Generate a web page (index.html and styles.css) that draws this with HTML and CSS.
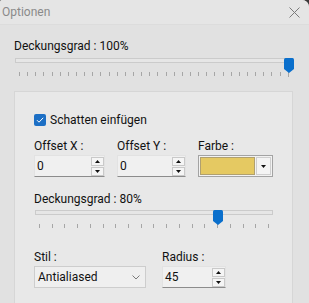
FILE: index.html
```html
<!DOCTYPE html>
<html lang="de">
<head>
<meta charset="utf-8">
<title>Optionen</title>
<link rel="stylesheet" href="styles.css">
</head>
<body>
<div class="window">
  <div class="titlebar">
    <span class="title">Optionen</span>
    <svg class="close" width="11" height="11" viewBox="0 0 11 11"><path d="M0.5 0.5L10.5 10.5M10.5 0.5L0.5 10.5" stroke="#7a7a7a" stroke-width="1" fill="none"/></svg>
  </div>
  <div class="content">
    <div class="label">Deckungsgrad : 100%</div>
    <div class="slider slider-main">
      <div class="track"></div>
      <svg class="thumb" style="left:269px" width="10" height="15" viewBox="0 0 10 15"><path d="M0 1.5Q0 0 1.5 0H8.5Q10 0 10 1.5V11L5 15L0 11Z" fill="#0a6fcc"/></svg>
      <div class="ticks">
        <i></i><i></i><i></i><i></i><i></i><i></i><i></i><i></i><i></i><i></i>
        <i></i><i></i><i></i><i></i><i></i><i></i><i></i><i></i><i></i><i></i>
        <i></i><i></i><i></i><i></i><i></i><i></i><i></i><i></i><i></i><i></i>
        <i></i><i></i><i></i><i class="end"></i>
      </div>
    </div>
    <div class="panel">
      <label class="check-row">
        <span class="checkbox"><svg width="12" height="12" viewBox="0 0 12 12"><path d="M3 6.2L5 8.2L9.2 3.8" stroke="#fff" stroke-width="1" fill="none"/></svg></span>
        <span>Schatten einfügen</span>
      </label>
      <div class="fields">
        <div class="field">
          <div class="label">Offset X :</div>
          <div class="spin">
            <span class="spin-value">0</span>
            <span class="spin-btns">
              <span class="spin-btn"><svg width="5" height="3" viewBox="0 0 5 3"><path d="M2.5 0L5 3H0Z" fill="#111"/></svg></span>
              <span class="spin-btn"><svg width="5" height="3" viewBox="0 0 5 3"><path d="M0 0H5L2.5 3Z" fill="#111"/></svg></span>
            </span>
          </div>
        </div>
        <div class="field">
          <div class="label">Offset Y :</div>
          <div class="spin">
            <span class="spin-value">0</span>
            <span class="spin-btns">
              <span class="spin-btn"><svg width="5" height="3" viewBox="0 0 5 3"><path d="M2.5 0L5 3H0Z" fill="#111"/></svg></span>
              <span class="spin-btn"><svg width="5" height="3" viewBox="0 0 5 3"><path d="M0 0H5L2.5 3Z" fill="#111"/></svg></span>
            </span>
          </div>
        </div>
        <div class="field">
          <div class="label">Farbe :</div>
          <div class="color-pick">
            <span class="swatch" style="background:#e5c962"></span>
            <span class="color-drop"><svg width="5" height="3" viewBox="0 0 5 3"><path d="M0 0H5L2.5 3Z" fill="#111"/></svg></span>
          </div>
        </div>
      </div>
      <div class="label label-clip">Deckungsgrad : 80%</div>
      <div class="slider slider-inner">
        <div class="track"></div>
        <svg class="thumb" style="left:178px" width="10" height="15" viewBox="0 0 10 15"><path d="M0 1.5Q0 0 1.5 0H8.5Q10 0 10 1.5V11L5 15L0 11Z" fill="#0a6fcc"/></svg>
        <div class="ticks">
          <i></i><i></i><i></i><i></i><i></i><i></i><i></i><i></i><i></i><i></i>
          <i></i><i></i><i></i><i></i><i></i><i></i><i></i><i></i><i></i>
        </div>
      </div>
      <div class="fields fields-bottom">
        <div class="field">
          <div class="label">Stil :</div>
          <div class="combo">
            <span>Antialiased</span>
            <svg width="8" height="5" viewBox="0 0 8 5"><path d="M0.5 0.5L4 4L7.5 0.5" stroke="#7a7a7a" stroke-width="1" fill="none"/></svg>
          </div>
        </div>
        <div class="field">
          <div class="label">Radius :</div>
          <div class="spin">
            <span class="spin-value">45</span>
            <span class="spin-btns">
              <span class="spin-btn"><svg width="5" height="3" viewBox="0 0 5 3"><path d="M2.5 0L5 3H0Z" fill="#111"/></svg></span>
              <span class="spin-btn"><svg width="5" height="3" viewBox="0 0 5 3"><path d="M0 0H5L2.5 3Z" fill="#111"/></svg></span>
            </span>
          </div>
        </div>
      </div>
    </div>
  </div>
</div>
</body>
</html>
```

FILE: styles.css
```css
html, body {
  margin: 0;
  padding: 0;
  background: #3a3a3a;
}
body {
  font-family: Roboto, "Noto Sans", sans-serif;
  font-size: 12px;
  line-height: 16px;
  color: #111;
}
.window {
  width: 309px;
  height: 303px;
  background: #e1e1e1;
  border-radius: 2px 7px 0 0;
  overflow: hidden;
}
.titlebar {
  height: 25px;
  box-sizing: border-box;
  background: #e5e5e5;
  border-bottom: 1px solid #dcdcdc;
  display: flex;
  align-items: center;
  justify-content: space-between;
  padding: 0 9px 0 2px;
}
.title {
  color: #8a8a8a;
  font-size: 12px;
}
.close {
  display: block;
}
.content {
  padding: 13px 16px 0 14px;
}
.label {
  height: 16px;
  white-space: nowrap;
}
.slider {
  position: relative;
  height: 22px;
}
.slider-main {
  margin: 4px 0 0 1px;
}
.track {
  margin-top: 4px;
  height: 3px;
  border: 1px solid #cbcbcb;
  background: #e6e6e6;
}
.thumb {
  position: absolute;
  top: 0;
  display: block;
}
.ticks {
  display: flex;
  justify-content: space-between;
  margin: 9px 4px 0 4px;
  height: 4px;
}
.ticks i {
  display: block;
  width: 1px;
  height: 4px;
  background: #a6a6a6;
}
.ticks i.end {
  height: 5px;
}
.panel {
  margin-top: 11px;
  height: 240px;
  background: #e8e8e8;
  border: 1px solid #d6d6d6;
  border-bottom: none;
  box-sizing: border-box;
  padding: 20px 0 0 19px;
}
.check-row {
  display: flex;
  align-items: center;
  gap: 4px;
  height: 16px;
}
.checkbox {
  width: 12px;
  height: 12px;
  border-radius: 2px;
  background: #1c6fc5;
  display: block;
}
.checkbox svg {
  display: block;
}
.fields {
  display: grid;
  grid-template-columns: 71px 69px 75px;
  column-gap: 12px;
  margin-top: 10px;
}
.field .label {
  margin-bottom: 1px;
}
.spin {
  height: 22px;
  box-sizing: border-box;
  background: #f0f0f0;
  border: 1px solid #e2e2e2;
  border-bottom-color: #8c8c8c;
  display: flex;
  align-items: center;
  justify-content: space-between;
  padding: 0 0 0 2px;
}
.spin-value {
  line-height: 16px;
}
.spin-btns {
  display: flex;
  flex-direction: column;
  gap: 1px;
}
.spin-btn {
  width: 13px;
  height: 9px;
  box-sizing: border-box;
  border: 1px solid #c9c9c9;
  background: #f5f5f5;
  display: flex;
  align-items: center;
  justify-content: center;
}
.spin-btn svg, .color-drop svg {
  display: block;
}
.color-pick {
  height: 22px;
  box-sizing: border-box;
  border: 1px solid #a3a3a3;
  background: #f2f2f2;
  display: flex;
  padding: 1px;
  gap: 1px;
}
.swatch {
  width: 55px;
  box-sizing: border-box;
  border: 1px solid #b0a070;
}
.color-drop {
  flex: 1;
  box-sizing: border-box;
  border: 1px solid #cfcfcf;
  background: #f4f4f4;
  display: flex;
  align-items: center;
  justify-content: center;
}
.label-clip {
  margin-top: 14px;
  overflow: hidden;
  height: 15px;
}
.slider-inner {
  margin-top: 1px;
  width: 238px;
  margin-left: 1px;
}
.fields-bottom {
  grid-template-columns: 112px 64px;
  column-gap: 16px;
  margin-top: 17px;
}
.combo {
  height: 22px;
  box-sizing: border-box;
  background: #efefef;
  border: 1px solid #cdcdcd;
  display: flex;
  align-items: center;
  justify-content: space-between;
  padding: 0 5px 0 3px;
}
.combo svg {
  display: block;
}
```
